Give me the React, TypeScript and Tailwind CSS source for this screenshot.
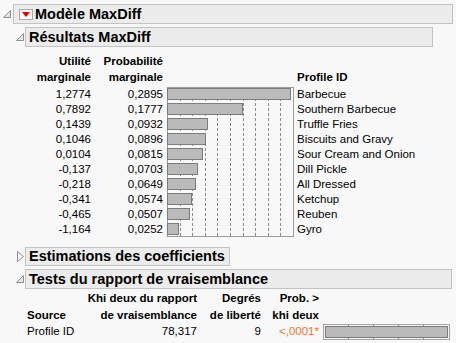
const rows = [
  { u: "1,2774", p: 0.2895, name: "Barbecue" },
  { u: "0,7892", p: 0.1777, name: "Southern Barbecue" },
  { u: "0,1439", p: 0.0932, name: "Truffle Fries" },
  { u: "0,1046", p: 0.0896, name: "Biscuits and Gravy" },
  { u: "0,0104", p: 0.0815, name: "Sour Cream and Onion" },
  { u: "-0,137", p: 0.0703, name: "Dill Pickle" },
  { u: "-0,218", p: 0.0649, name: "All Dressed" },
  { u: "-0,341", p: 0.0574, name: "Ketchup" },
  { u: "-0,465", p: 0.0507, name: "Reuben" },
  { u: "-1,164", p: 0.0252, name: "Gyro" },
];

const fmt = (v: number) => v.toFixed(4).replace(".", ",");

function OpenTri() {
  return (
    <svg width="8" height="8" viewBox="0 0 8 8" className="shrink-0">
      <path d="M7.5 0.5 L7.5 7.5 L0.5 7.5 Z" fill="#e4e4e4" stroke="#8f8f8f" strokeWidth="1" />
    </svg>
  );
}

function ClosedTri() {
  return (
    <svg width="7" height="11" viewBox="0 0 7 11" className="shrink-0">
      <path d="M0.5 0.5 L6.5 5.5 L0.5 10.5 Z" fill="#f4f4f4" stroke="#8f8f8f" strokeWidth="1" />
    </svg>
  );
}

function RedButton() {
  return (
    <div className="w-[14px] h-[11px] border border-[#a9a9a9] bg-[#fafafa] flex items-center justify-center shrink-0">
      <svg width="8" height="5" viewBox="0 0 8 5">
        <path d="M0 0 L8 0 L4 5 Z" fill="#e00000" />
      </svg>
    </div>
  );
}

function Chart() {
  const W = 127;
  const H = 150;
  const grid = [1, 2, 3, 4, 5, 6, 7, 8, 9].map((k) => Math.round(k * 12.6) + 0.5);
  return (
    <svg width={W} height={H} className="shrink-0">
      <rect x="0.5" y="0.5" width={W - 1} height={H - 1} fill="none" stroke="#9a9a9a" />
      {grid.map((x) => (
        <line key={x} x1={x} y1="1" x2={x} y2={H - 1} stroke="#8a8a8a" strokeDasharray="3 2" />
      ))}
      {rows.map((r, i) => (
        <rect
          key={r.name}
          x="0.5"
          y={1.5 + i * 15}
          width={Math.round((r.p / 0.2946) * 125)}
          height="11"
          fill="#bababa"
          stroke="#7c7c7c"
        />
      ))}
    </svg>
  );
}

function PBar() {
  return (
    <svg width="127" height="16" className="shrink-0">
      <rect x="0.5" y="0.5" width="126" height="15" fill="#f4f4f4" stroke="#a5a5a5" />
      {[25, 50, 75, 100].map((x) => (
        <g key={x}>
          <line x1={x + 0.5} y1="1" x2={x + 0.5} y2="3" stroke="#8a8a8a" />
          <line x1={x + 0.5} y1="13" x2={x + 0.5} y2="15" stroke="#8a8a8a" />
        </g>
      ))}
      <rect x="2.5" y="2.5" width="122" height="11" fill="#bababa" stroke="#7c7c7c" />
    </svg>
  );
}

export default function App() {
  return (
    <div className="w-[456px] h-[343px] overflow-hidden bg-[#f8f8f8] text-black font-['Liberation_Sans',Arial,sans-serif] text-[11.5px] whitespace-nowrap">
      {/* Modèle MaxDiff */}
      <div className="flex items-center pt-[4px] pl-[3px] pr-[3px]">
        <OpenTri />
        <div className="ml-[2px] flex-1 h-[20px] border border-[#c3c3c3] bg-[#ececec] flex items-center pl-[5px]">
          <RedButton />
          <span className="ml-[2px] font-bold text-[14.5px] leading-none">Modèle MaxDiff</span>
        </div>
      </div>

      {/* Résultats MaxDiff */}
      <div className="flex items-center mt-[3px] pl-[16px]">
        <OpenTri />
        <div className="ml-[1px] w-[408px] h-[20px] border border-[#c3c3c3] bg-[#ececec] flex items-center pl-[3px]">
          <span className="font-bold text-[14.5px] leading-none">Résultats MaxDiff</span>
        </div>
      </div>

      {/* column headers */}
      <div className="flex mt-[6px] font-bold leading-[16px]">
        <div className="w-[91px] text-right">
          <div>Utilité</div>
          <div>marginale</div>
        </div>
        <div className="w-[72px] text-right">
          <div>Probabilité</div>
          <div>marginale</div>
        </div>
        <div className="w-[134px]" />
        <div className="self-end">Profile ID</div>
      </div>

      {/* table with chart */}
      <div className="flex mt-[2px] leading-[15px]">
        <div className="w-[91px] text-right">
          {rows.map((r) => (
            <div key={r.name} className="h-[15px]">{r.u}</div>
          ))}
        </div>
        <div className="w-[72px] text-right">
          {rows.map((r) => (
            <div key={r.name} className="h-[15px]">{fmt(r.p)}</div>
          ))}
        </div>
        <div className="ml-[4px]">
          <Chart />
        </div>
        <div className="ml-[3px]">
          {rows.map((r) => (
            <div key={r.name} className="h-[15px]">{r.name}</div>
          ))}
        </div>
      </div>

      {/* Estimations des coefficients */}
      <div className="flex items-center mt-[10px] pl-[17px]">
        <ClosedTri />
        <div className="ml-[1px] w-[205px] h-[19px] border border-[#c3c3c3] bg-[#ececec] flex items-center pl-[3px]">
          <span className="font-bold text-[14.5px] leading-none">Estimations des coefficients</span>
        </div>
      </div>

      {/* Tests du rapport de vraisemblance */}
      <div className="flex items-center mt-[3px] pl-[16px]">
        <OpenTri />
        <div className="ml-[1px] w-[427px] h-[20px] border border-[#c3c3c3] bg-[#ececec] flex items-center pl-[3px]">
          <span className="font-bold text-[14.5px] leading-none">Tests du rapport de vraisemblance</span>
        </div>
      </div>

      <div className="flex pl-[27px] mt-[1px] font-bold leading-[17px]">
        <div className="w-[55px] self-end">Source</div>
        <div className="w-[115px] text-right">
          <div>Khi deux du rapport</div>
          <div>de vraisemblance</div>
        </div>
        <div className="w-[64px] text-right">
          <div>Degrés</div>
          <div>de liberté</div>
        </div>
        <div className="w-[58px] text-right">
          <div>Prob. &gt;</div>
          <div>khi deux</div>
        </div>
      </div>
      <div className="flex items-center pl-[27px] h-[16px]">
        <div className="w-[55px]">Profile ID</div>
        <div className="w-[115px] text-right">78,317</div>
        <div className="w-[64px] text-right">9</div>
        <div className="w-[58px] text-right text-[#ea7a2c]">&lt;,0001*</div>
        <div className="ml-[4px]">
          <PBar />
        </div>
      </div>
    </div>
  );
}
